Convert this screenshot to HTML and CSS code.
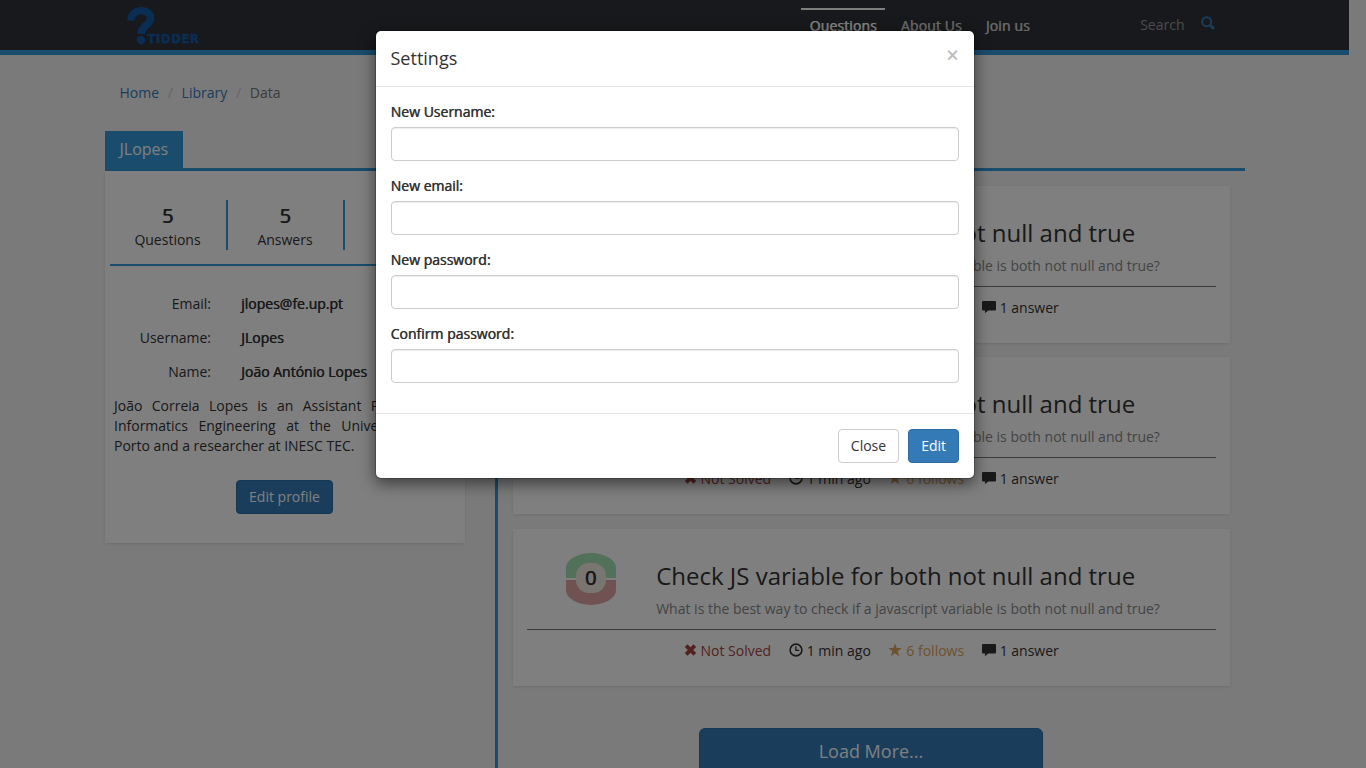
FILE: index.html
```html
<!DOCTYPE html>
<html lang="en">
<head>
<meta charset="utf-8">
<title>Tidder</title>
<link rel="stylesheet" href="styles.css">
</head>
<body>
<svg class="defs" aria-hidden="true">
  <symbol id="i-x" viewBox="0 0 12 12"><path d="M3 .3 6 3.300 9 .3 11.700 3 8.700 6l3 3L9 11.700 6 8.700 3 11.700.3 9l3-3-3-3z"/></symbol>
  <symbol id="i-time" viewBox="0 0 14 14"><circle cx="7" cy="7" r="5.9" fill="none" stroke="currentColor" stroke-width="1.6"/><path d="M6.2 3.3h1.3v3.4h2.8V8H6.2z"/></symbol>
  <symbol id="i-star" viewBox="0 0 14 14"><path d="m7 .3 1.7 4.8h5L9.7 8.2l1.5 5L7 10.2l-4.2 3 1.5-5-4-3.1h5z"/></symbol>
  <symbol id="i-comment" viewBox="0 0 14 13"><path d="M1 .5h12a1 1 0 0 1 1 1V9a1 1 0 0 1-1 1H6.3l-3.5 2.8.4-2.8H1a1 1 0 0 1-1-1V1.500a1 1 0 0 1 1-1z"/></symbol>
</svg>
<header class="navbar">
  <div class="container nav-row">
    <a class="logo"><svg class="logo-mark" viewBox="0 0 28 38"><path d="M4 13.500C4 1 23.500 1 23.500 11c0 8-9.500 7-9.500 16" fill="none" stroke="currentColor" stroke-width="7.500"/><circle cx="14" cy="33" r="4.200"/></svg><span class="logo-text">TIDDER</span></a>
    <nav class="links"><a class="active">Questions</a><a>About Us</a><a>Join us</a></nav>
    <div class="search"><span>Search</span><svg viewBox="0 0 14 14"><circle cx="5.700" cy="5.700" r="4.500" fill="none" stroke="currentColor" stroke-width="2"/><path d="m9 9 4 4" stroke="currentColor" stroke-width="2.600"/></svg></div>
  </div>
</header>
<main class="container">
  <ol class="breadcrumb"><li class="link">Home</li><li class="sep">/</li><li class="link">Library</li><li class="sep">/</li><li>Data</li></ol>
  <div class="tabs"><span class="tab">JLopes</span></div>
  <div class="columns">
    <aside class="profile panel">
      <div class="stats">
        <div class="stat"><b>5</b><span>Questions</span></div>
        <div class="stat"><b>5</b><span>Answers</span></div>
        <div class="stat"></div>
      </div>
      <dl class="info">
        <dt>Email:</dt><dd>jlopes@fe.up.pt</dd>
        <dt>Username:</dt><dd>JLopes</dd>
        <dt>Name:</dt><dd>João António Lopes</dd>
      </dl>
      <p class="bio">João Correia Lopes is an Assistant Professor in Informatics Engineering at the University <span class="line-end">of</span> <span class="keep">Porto and</span> a researcher at INESC TEC.</p>
      <button class="btn primary">Edit profile</button>
    </aside>
    <section class="questions">
      <article class="question panel">
        <div class="top"><div class="vote"><i class="up"></i><i class="down"></i><b>0</b></div><div class="text"><h2>Check JS variable for both not null and true</h2><p>What is the best way to check if a javascript variable is both not null and true?</p></div></div>
        <div class="meta"><span class="danger"><svg class="m-x"><use href="#i-x"/></svg>Not Solved</span><span><svg class="m-time"><use href="#i-time"/></svg>1 min ago</span><span class="warn"><svg class="m-star"><use href="#i-star"/></svg>6 follows</span><span><svg class="m-comment"><use href="#i-comment"/></svg>1 answer</span></div>
      </article>
      <article class="question panel">
        <div class="top"><div class="vote"><i class="up"></i><i class="down"></i><b>0</b></div><div class="text"><h2>Check JS variable for both not null and true</h2><p>What is the best way to check if a javascript variable is both not null and true?</p></div></div>
        <div class="meta"><span class="danger"><svg class="m-x"><use href="#i-x"/></svg>Not Solved</span><span><svg class="m-time"><use href="#i-time"/></svg>1 min ago</span><span class="warn"><svg class="m-star"><use href="#i-star"/></svg>6 follows</span><span><svg class="m-comment"><use href="#i-comment"/></svg>1 answer</span></div>
      </article>
      <article class="question panel">
        <div class="top"><div class="vote"><i class="up"></i><i class="down"></i><b>0</b></div><div class="text"><h2>Check JS variable for both not null and true</h2><p>What is the best way to check if a javascript variable is both not null and true?</p></div></div>
        <div class="meta"><span class="danger"><svg class="m-x"><use href="#i-x"/></svg>Not Solved</span><span><svg class="m-time"><use href="#i-time"/></svg>1 min ago</span><span class="warn"><svg class="m-star"><use href="#i-star"/></svg>6 follows</span><span><svg class="m-comment"><use href="#i-comment"/></svg>1 answer</span></div>
      </article>
      <button class="btn primary load">Load More...</button>
    </section>
  </div>
</main>
<div class="backdrop">
  <div class="modal" role="dialog">
    <div class="modal-header"><h4>Settings</h4><span class="close">×</span></div>
    <form class="modal-body">
      <label>New Username:</label><input type="text">
      <label>New email:</label><input type="text">
      <label>New password:</label><input type="password">
      <label>Confirm password:</label><input type="password">
    </form>
    <div class="modal-footer"><button class="btn">Close</button><button class="btn primary">Edit</button></div>
  </div>
</div>
</body>
</html>
```

FILE: styles.css
```css
* { box-sizing: border-box; }
body { margin: 0; height: 768px; overflow: hidden; padding-right: 17px; background: #f5f5f5; color: #333; font: 400 14px/20px "Open Sans", sans-serif; }
.defs { position: absolute; width: 0; height: 0; }
h2, h4, p, dl, dd, ol { margin: 0; padding: 0; }
svg { fill: currentColor; }
.container { width: 1140px; margin: 0 auto; }
.navbar { height: 55px; background: #303338; border-bottom: 5px solid #3498db; }
.nav-row { display: flex; height: 50px; align-items: flex-start; }
.logo { display: flex; align-items: flex-end; width: 696px; height: 45px; padding-left: 22px; color: #145aa8; }
.logo-mark { width: 28px; height: 38px; }
.logo-text { margin-left: -7px; font: 700 11.5px/12px "DejaVu Sans", sans-serif; letter-spacing: .7px; -webkit-text-stroke: .5px; }
.links { display: flex; padding-top: 8px; }
.links a { height: 42px; padding: 6px 8px 0 9px; margin-right: 7px; border-top: 2px solid transparent; color: #fff; letter-spacing: .12px; text-shadow: .5px 0 currentColor; }
.links a:not(.active) { color: #ccc; }
.links .active { border-color: #fff; }
.search { display: flex; gap: 16px; margin-left: auto; padding: 15px 30px 0 0; color: #999; }
.search svg { width: 14px; height: 14px; margin-top: 1px; color: #337ab7; }
.breadcrumb { display: flex; height: 76px; padding: 28px 15px 0; list-style: none; color: #777; }
.breadcrumb .link { color: #337ab7; }
.breadcrumb .sep { width: 22.5px; text-align: center; color: #ccc; }
.tabs { height: 40px; border-bottom: 3px solid #3498db; }
.tab { display: inline-block; height: 37px; padding: 0 15px; background: #3498db; color: #fff; font-size: 16px; line-height: 36px; }
.columns { display: flex; }
.panel { background: #fff; box-shadow: 0 1px 3px rgba(0,0,0,.1); }
.profile { display: flex; flex-direction: column; align-items: center; width: 360px; height: 372px; padding: 0 5px; flex: none; }
.stats { display: flex; width: 100%; height: 95px; padding-top: 29px; border-bottom: 2px solid #3498db; }
.stat { display: flex; flex-direction: column; align-items: center; width: 118px; height: 50px; padding-top: 5px; border-right: 2px solid #3498db; flex: none; }
.stat + .stat { width: 117px; }
.stat:last-child { border: 0; width: 115px; }
.stat b { font-size: 20px; line-height: 22px; font-weight: 400; text-shadow: .7px 0 currentColor; }
.stat span { line-height: 26px; }
.info { display: grid; grid-template-columns: 101.5px 1fr; column-gap: 30px; row-gap: 14px; width: 100%; padding-top: 28px; }
dt { text-align: right; }
dd { text-shadow: .5px 0 currentColor; }
.bio { width: 341px; margin: 14px 0 24px; text-align: justify; }
.keep { white-space: nowrap; }
.line-end { padding-right: 25px; }
.btn { height: 34px; padding: 0 12px; border: 1px solid #ccc; border-radius: 4px; background: #fff; color: #333; font: 400 14px/20px "Open Sans", sans-serif; }
.btn.primary { background: #337ab7; border-color: #2e6da4; color: #fff; }
.questions { display: flex; flex-direction: column; width: 750px; height: 620px; margin-left: 30px; padding: 15px 15px 0; border-left: 3px solid #3498db; }
.question { height: 157px; margin-bottom: 14.4px; padding: 0 14px; flex: none; }
.top { display: flex; height: 101px; border-bottom: 1px solid #777; }
.vote { display: grid; grid-template-rows: 25px 25px; row-gap: 2px; width: 50px; height: 52px; margin: 24px 40px 0 39px; }
.vote i, .vote b { grid-column: 1; }
.up { grid-row: 1; background: #a5e0b4; border-radius: 25px 25px 0 0 / 15px 15px 0 0; }
.down { grid-row: 2; background: #e0a5a5; border-radius: 0 0 25px 25px / 0 0 15px 15px; }
.vote b { grid-row: 1 / 3; width: 30px; height: 30px; margin: 10px; border-radius: 13px; background: #f3ebe0; text-align: center; font-size: 20px; line-height: 29px; font-weight: 400; text-shadow: .7px 0 currentColor; }
.text { padding: 32px 0 0 .7px; }
.text h2 { font-size: 24px; line-height: 30px; font-weight: 400; white-space: nowrap; }
.text p { margin-top: 8px; color: #888; white-space: nowrap; }
.meta { display: flex; padding: 11px 0 0 157px; gap: 17.5px; }
.meta span { display: flex; white-space: nowrap; }
.meta svg { width: 14px; height: 14px; margin: 2px 4px 0 0; }
.meta svg.m-x { width: 13px; height: 12px; margin-top: 3px; }
.danger { color: #a94442; }
.warn { color: #dca35c; }
.load { width: 344px; height: 46px; margin: 27.8px auto 0; border-radius: 6px; font-size: 18px; flex: none; }
.backdrop { position: absolute; inset: 0; padding: 30px 16px 0 0; background: rgba(0,0,0,.5); }
.modal { width: 600px; margin: 0 auto; border: 1px solid rgba(0,0,0,.2); border-radius: 6px; background: #fff; background-clip: padding-box; box-shadow: 0 5px 15px rgba(0,0,0,.5); }
.modal-header { display: flex; justify-content: space-between; height: 56px; padding: 15px; border-bottom: 1px solid #e5e5e5; }
.modal-header h4 { margin-left: -.5px; font-size: 18px; line-height: 25px; font-weight: 400; }
.close { width: 13px; line-height: 18px; text-align: center; font-size: 21px; color: #bbb; -webkit-text-stroke: .4px; }
.modal-body { display: flex; flex-direction: column; padding: 15px; }
.modal-body label { margin: 0 0 5px -.5px; text-shadow: .5px 0 currentColor; }
.modal-body input { height: 34px; margin-bottom: 15px; border: 1px solid #ccc; border-radius: 4px; box-shadow: inset 0 1px 1px rgba(0,0,0,.075); }
.modal-footer { display: flex; justify-content: flex-end; gap: 9px; padding: 15px; border-top: 1px solid #e5e5e5; }
```
